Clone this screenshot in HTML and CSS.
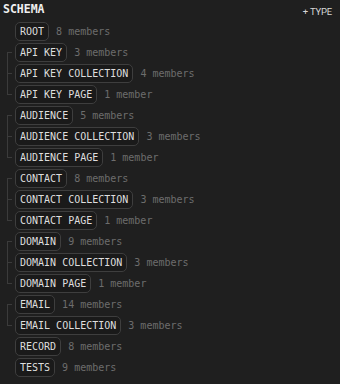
FILE: index.html
```html
<!DOCTYPE html>
<html>
<head>
    <title>Schema</title>
    <link rel="stylesheet" href="styles.css">
</head>
<body>
    <div class="panel">
        <div class="header">
            <div class="title">SCHEMA</div>
            <button class="add-type">+ TYPE</button>
        </div>

        <div class="tree">
            <div class="row"><span class="pill">ROOT</span><span class="count">8 members</span></div>

            <div class="group">
                <div class="row"><span class="pill">API KEY</span><span class="count">3 members</span></div>
                <div class="row"><span class="pill">API KEY COLLECTION</span><span class="count">4 members</span></div>
                <div class="row"><span class="pill">API KEY PAGE</span><span class="count">1 member</span></div>
            </div>

            <div class="group">
                <div class="row"><span class="pill">AUDIENCE</span><span class="count">5 members</span></div>
                <div class="row"><span class="pill">AUDIENCE COLLECTION</span><span class="count">3 members</span></div>
                <div class="row"><span class="pill">AUDIENCE PAGE</span><span class="count">1 member</span></div>
            </div>

            <div class="group">
                <div class="row"><span class="pill">CONTACT</span><span class="count">8 members</span></div>
                <div class="row"><span class="pill">CONTACT COLLECTION</span><span class="count">3 members</span></div>
                <div class="row"><span class="pill">CONTACT PAGE</span><span class="count">1 member</span></div>
            </div>

            <div class="group">
                <div class="row"><span class="pill">DOMAIN</span><span class="count">9 members</span></div>
                <div class="row"><span class="pill">DOMAIN COLLECTION</span><span class="count">3 members</span></div>
                <div class="row"><span class="pill">DOMAIN PAGE</span><span class="count">1 member</span></div>
            </div>

            <div class="group">
                <div class="row"><span class="pill">EMAIL</span><span class="count">14 members</span></div>
                <div class="row"><span class="pill">EMAIL COLLECTION</span><span class="count">3 members</span></div>
            </div>

            <div class="row"><span class="pill">RECORD</span><span class="count">8 members</span></div>
            <div class="row"><span class="pill">TESTS</span><span class="count">9 members</span></div>
        </div>
    </div>
</body>
</html>
```

FILE: styles.css
```css
body {
    margin: 0;
    background: #1f1f1f;
    font-family: "DejaVu Sans Mono", monospace;
}

.panel {
    padding: 2px 8px 0 3px;
}

.header {
    display: flex;
    justify-content: space-between;
    align-items: center;
    height: 14px;
    margin-bottom: 6px;
}

.title {
    font-size: 11.5px;
    line-height: 14px;
    font-weight: bold;
    color: #f0f0f0;
}

.add-type {
    background: none;
    border: none;
    padding: 0;
    margin-top: 4px;
    font-family: Roboto, sans-serif;
    font-size: 9.5px;
    color: #d6d6d6;
    letter-spacing: -0.2px;
}

.tree {
    display: flex;
    flex-direction: column;
    gap: 2px;
    padding-left: 12px;
}

.group {
    position: relative;
    display: flex;
    flex-direction: column;
    gap: 2px;
}

/* vertical connector from first to last child */
.group::before {
    content: "";
    position: absolute;
    left: -8px;
    top: 9px;
    bottom: 9px;
    width: 1px;
    background: #3b3b3b;
}

.group .row {
    position: relative;
}

.group .row::before {
    content: "";
    position: absolute;
    left: -8px;
    top: 9px;
    width: 5px;
    height: 1px;
    background: #3b3b3b;
}

.row {
    display: flex;
    align-items: center;
    gap: 7px;
    height: 19px;
}

.pill {
    font-size: 10px;
    line-height: 17px;
    padding: 0 4px;
    color: #dedede;
    background: #1a1a1a;
    border: 1px solid #3e3e3e;
    border-radius: 5px;
    white-space: nowrap;
}

.count {
    font-size: 10px;
    color: #6d6d6d;
    white-space: nowrap;
}
```
